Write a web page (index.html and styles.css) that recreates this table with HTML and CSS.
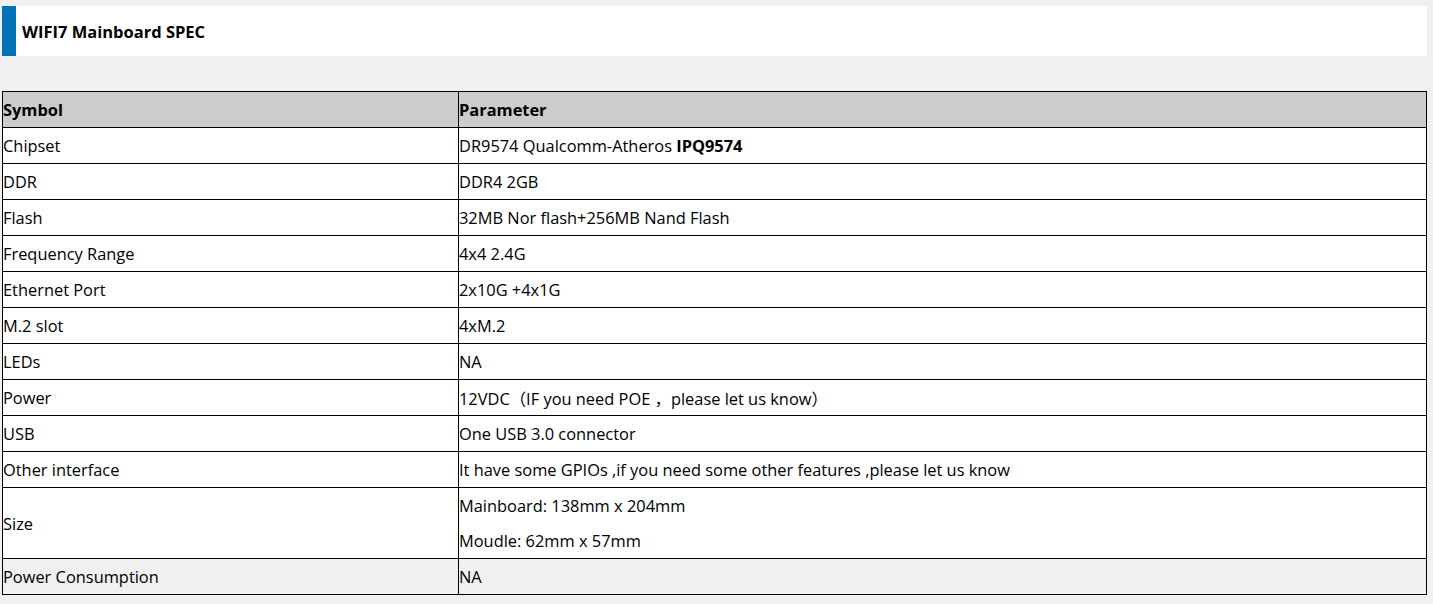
FILE: index.html
```html
<!DOCTYPE html>
<html>
<head>
<meta charset="utf-8">
<link rel="stylesheet" href="styles.css">
</head>
<body>
<div class="page">
  <div class="title-bar">
    <div class="accent"></div>
    <h2 class="title">WIFI7 Mainboard SPEC</h2>
  </div>
  <table class="spec">
    <thead>
      <tr><th class="c1">Symbol</th><th>Parameter</th></tr>
    </thead>
    <tbody>
      <tr><td>Chipset</td><td>DR9574 Qualcomm-Atheros <b>IPQ9574</b></td></tr>
      <tr><td>DDR</td><td>DDR4 2GB</td></tr>
      <tr><td>Flash</td><td>32MB Nor flash+256MB Nand Flash</td></tr>
      <tr><td>Frequency Range</td><td>4x4 2.4G</td></tr>
      <tr><td>Ethernet Port</td><td>2x10G +4x1G</td></tr>
      <tr><td>M.2 slot</td><td>4xM.2</td></tr>
      <tr><td>LEDs</td><td>NA</td></tr>
      <tr><td>Power</td><td>12VDC（IF you need POE&nbsp;，please let us know）</td></tr>
      <tr><td>USB</td><td>One USB 3.0 connector</td></tr>
      <tr><td>Other interface</td><td>It have some GPIOs ,if you need some other features ,please let us know</td></tr>
      <tr class="tall"><td>Size</td><td><p>Mainboard: 138mm x 204mm</p><p>Moudle: 62mm x 57mm</p></td></tr>
      <tr class="last"><td>Power Consumption</td><td>NA</td></tr>
    </tbody>
  </table>
</div>
</body>
</html>
```
FILE: styles.css
```css
html, body {
  margin: 0;
  padding: 0;
  background: #f0f0f0;
}
body {
  font-family: "Open Sans", "Noto Sans", "Liberation Sans", "Noto Sans CJK SC", sans-serif;
  color: #000;
}
.page {
  padding: 6px 6px 0 2px;
}
.title-bar {
  display: flex;
  align-items: center;
  height: 50px;
  background: #fff;
}
.accent {
  width: 14px;
  align-self: stretch;
  background: #0073b7;
}
.title {
  margin: 0 0 0 6px;
  font-size: 16.5px;
  font-weight: 700;
}
.spec {
  margin-top: 35px;
  width: 1425px;
  border-collapse: collapse;
  font-size: 16.4px;
}
.spec th, .spec td {
  border: 1px solid #000;
  padding: 0;
  height: 35px;
  text-align: left;
  vertical-align: middle;
}
.spec th {
  background: #cccccc;
  font-weight: 700;
}
.spec td {
  background: #fff;
}
.spec .c1 {
  width: 455px;
}
.spec tr.tall td {
  height: 70px;
}
.spec tr.tall p {
  margin: 0;
  line-height: 35px;
}
.spec tr.last td {
  background: #f0f0f0;
}
```
